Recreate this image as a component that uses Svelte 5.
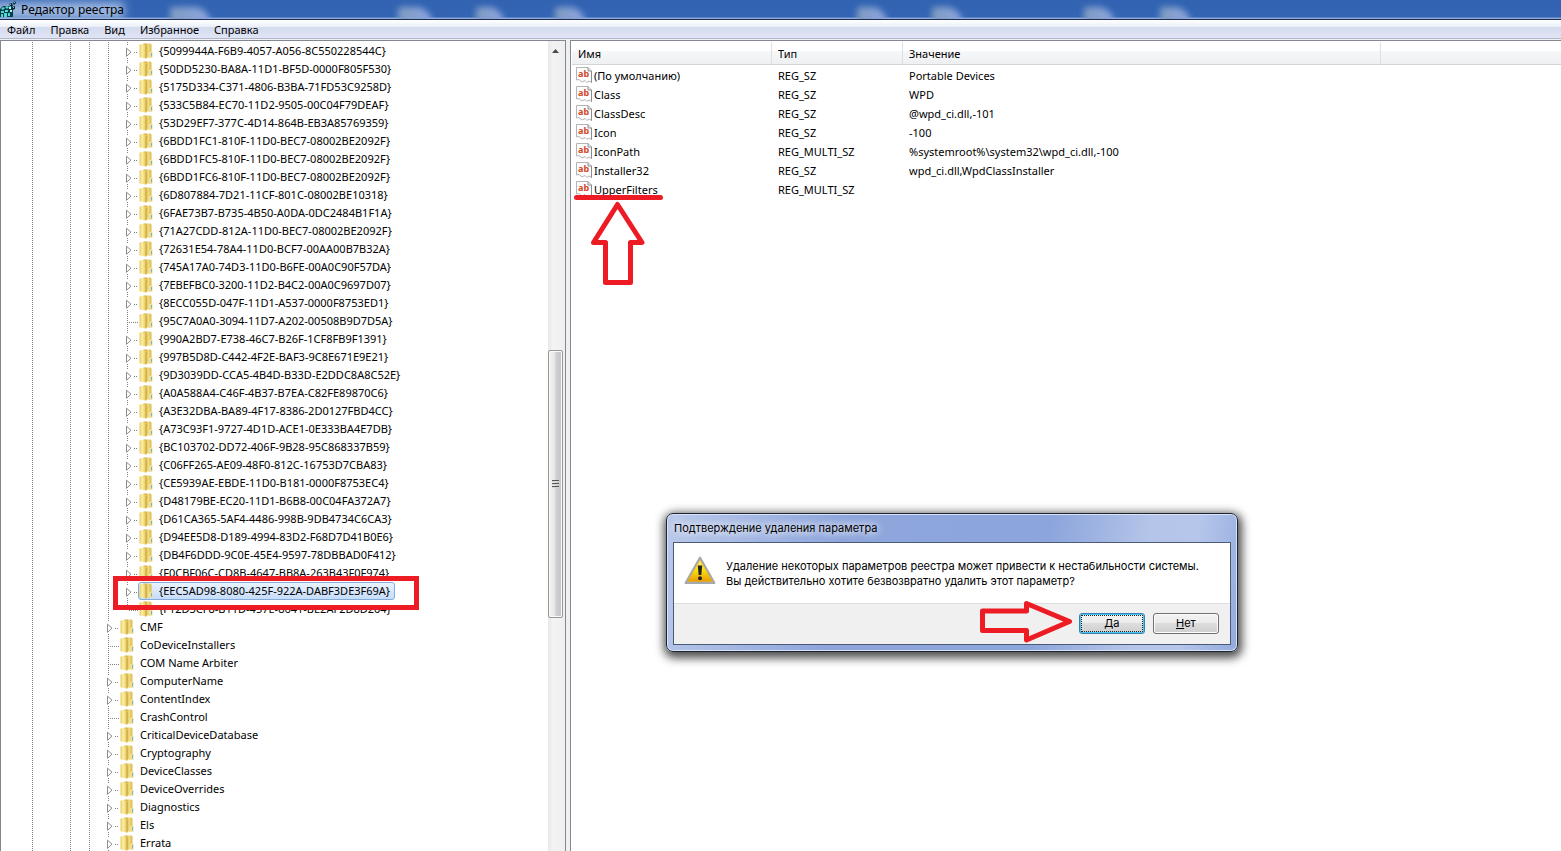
<script>
  const menu = ['Файл', 'Правка', 'Вид', 'Избранное', 'Справка'];

  // keys inside Control\Class, drawn one level deeper
  const classKeys = [
    '{5099944A-F6B9-4057-A056-8C550228544C}',
    '{50DD5230-BA8A-11D1-BF5D-0000F805F530}',
    '{5175D334-C371-4806-B3BA-71FD53C9258D}',
    '{533C5B84-EC70-11D2-9505-00C04F79DEAF}',
    '{53D29EF7-377C-4D14-864B-EB3A85769359}',
    '{6BDD1FC1-810F-11D0-BEC7-08002BE2092F}',
    '{6BDD1FC5-810F-11D0-BEC7-08002BE2092F}',
    '{6BDD1FC6-810F-11D0-BEC7-08002BE2092F}',
    '{6D807884-7D21-11CF-801C-08002BE10318}',
    '{6FAE73B7-B735-4B50-A0DA-0DC2484B1F1A}',
    '{71A27CDD-812A-11D0-BEC7-08002BE2092F}',
    '{72631E54-78A4-11D0-BCF7-00AA00B7B32A}',
    '{745A17A0-74D3-11D0-B6FE-00A0C90F57DA}',
    '{7EBEFBC0-3200-11D2-B4C2-00A0C9697D07}',
    '{8ECC055D-047F-11D1-A537-0000F8753ED1}',
    '{95C7A0A0-3094-11D7-A202-00508B9D7D5A}',
    '{990A2BD7-E738-46C7-B26F-1CF8FB9F1391}',
    '{997B5D8D-C442-4F2E-BAF3-9C8E671E9E21}',
    '{9D3039DD-CCA5-4B4D-B33D-E2DDC8A8C52E}',
    '{A0A588A4-C46F-4B37-B7EA-C82FE89870C6}',
    '{A3E32DBA-BA89-4F17-8386-2D0127FBD4CC}',
    '{A73C93F1-9727-4D1D-ACE1-0E333BA4E7DB}',
    '{BC103702-DD72-406F-9B28-95C868337B59}',
    '{C06FF265-AE09-48F0-812C-16753D7CBA83}',
    '{CE5939AE-EBDE-11D0-B181-0000F8753EC4}',
    '{D48179BE-EC20-11D1-B6B8-00C04FA372A7}',
    '{D61CA365-5AF4-4486-998B-9DB4734C6CA3}',
    '{D94EE5D8-D189-4994-83D2-F68D7D41B0E6}',
    '{DB4F6DDD-9C0E-45E4-9597-78DBBAD0F412}',
    '{F0CBF06C-CD8B-4647-BB8A-263B43F0F974}',
    '{EEC5AD98-8080-425F-922A-DABF3DE3F69A}',
    '{F12D3CF8-B11D-457E-8641-BE2AF2D8D204}'
  ];
  const controlKeys = [
    'CMF',
    'CoDeviceInstallers',
    'COM Name Arbiter',
    'ComputerName',
    'ContentIndex',
    'CrashControl',
    'CriticalDeviceDatabase',
    'Cryptography',
    'DeviceClasses',
    'DeviceOverrides',
    'Diagnostics',
    'Els',
    'Errata'
  ];
  // keys without subkeys have no arrow
  const leaves = [classKeys[15], classKeys[31], 'CoDeviceInstallers', 'COM Name Arbiter', 'CrashControl'];

  const rows = [
    ...classKeys.map((name) => ({ name, deep: true, last: name === classKeys[31] })),
    ...controlKeys.map((name) => ({ name, deep: false, last: false }))
  ];

  let selected = $state(classKeys[30]);

  const values = [
    ['(По умолчанию)', 'REG_SZ', 'Portable Devices'],
    ['Class', 'REG_SZ', 'WPD'],
    ['ClassDesc', 'REG_SZ', '@wpd_ci.dll,-101'],
    ['Icon', 'REG_SZ', '-100'],
    ['IconPath', 'REG_MULTI_SZ', '%systemroot%\\system32\\wpd_ci.dll,-100'],
    ['Installer32', 'REG_SZ', 'wpd_ci.dll,WpdClassInstaller'],
    ['UpperFilters', 'REG_MULTI_SZ', '']
  ];

  // desktop icons that shine through the title bar
  const blobs = [
    [170, 40], [398, 34], [476, 28], [555, 30], [857, 30], [932, 30], [1084, 30], [1160, 30]
  ];
</script>

<svg width="0" height="0" class="defs" aria-hidden="true">
  <defs>
    <linearGradient id="folderFront" x1="0" x2="1">
      <stop offset="0" stop-color="#e6c95c" />
      <stop offset="0.4" stop-color="#fbf0a8" />
      <stop offset="1" stop-color="#e6c75c" />
    </linearGradient>
    <linearGradient id="folderBack" x1="0" x2="1">
      <stop offset="0.3" stop-color="#cfa93c" />
      <stop offset="0.6" stop-color="#f1dc84" />
      <stop offset="1" stop-color="#dcb84a" />
    </linearGradient>
    <linearGradient id="warn" x1="0" x2="0" y1="0" y2="1">
      <stop offset="0" stop-color="#fff27a" />
      <stop offset="0.5" stop-color="#fbdc10" />
      <stop offset="1" stop-color="#e99c08" />
    </linearGradient>
  </defs>
</svg>

<div class="window">
  <header class="titlebar">
    {#each blobs as [x, w]}
      <i class="blob" style="left: {x}px; width: {w}px"></i>
    {/each}
    <svg class="appicon" width="17" height="17" viewBox="0 0 17 17">
      <path d="M0 8l3-3h8l2 3v8H0z" fill="#0c3f45" />
      <path d="M1 8l2-2 2 1-2 2zM5 6l2-1 2 1-2 2zM1 10h3v2H1zM5 9h3v2H5zM1 13h2v3H1zM4 12h3v4H4zM8 12h2v3H8z" fill="#4fd8da" />
      <path d="M9 6l2-1v3H9zM10 9h2v2h-2z" fill="#b7f6f2" />
      <path d="M9 3l3-1 1 3-2 1zM13 2l2-2 1 2-2 2zM12 6l3-1v3l-3 1z" fill="#0a2226" />
      <path d="M10 3h1v1h-1zM14 1h1v1h-1zM13 6h1v1h-1z" fill="#4fd8da" />
    </svg>
    <span class="caption">Редактор реестра</span>
  </header>

  <nav class="menu">
    {#each menu as item}
      <button>{item}</button>
    {/each}
  </nav>

  <main>
    <section class="tree">
      <ul>
        {#each rows as row (row.name)}
          <li>
            <span class="guide"></span>
            <span class="guide blank"></span>
            <span class="guide"></span>
            <span class="guide"></span>
            {#if row.deep}
              <span class="guide"></span>
            {/if}
            <svg class="toggle" width="12" height="18" viewBox="0 0 12 18">
              {#if leaves.includes(row.name)}
                <path d={row.last ? 'M1.5 0V10' : 'M1.5 0V18'} class="dots" />
                <path d="M3 10.5H12" class="dots" />
              {:else}
                <path d="M1.5 0V4M1.5 16V18" class="dots" />
                <path d="M0.5 6.2V14.3L5 10.2z" fill="#fff" stroke="#8c8c8c" />
                <path d="M8 10.5H12" class="dots" />
              {/if}
            </svg>
            <button class="key" class:selected={selected === row.name} onclick={() => (selected = row.name)}>
              <svg width="14" height="16" viewBox="0 0 14 16">
                <path d="M4 1L5 0.5H11.5L12.5 1.5V14.5H7L4 15z" fill="url(#folderBack)" />
                <path d="M0.5 2L1 1.2H6L7 2.5V15.5L1 14.5L0.5 14z" fill="url(#folderFront)" />
                <path d="M7 3V15.5" stroke="#c3a03a" stroke-width="0.8" />
                <path d="M9.5 9V14.5L13.5 14.5V8.5z" fill="#f3df8c" />
                <path d="M12.5 10V13.5" stroke="#6fb3dc" />
              </svg>
              <span>{row.name}</span>
            </button>
            {#if row.name === classKeys[30]}
              <i class="frame"></i>
            {/if}
          </li>
        {/each}
      </ul>
      <div class="scroll">
        <svg class="up" width="7" height="5" viewBox="0 0 7 5"><path d="M0 4L3.5 0L7 4z" fill="#4a4a4a" /></svg>
        <div class="thumb">
          <svg width="7" height="9" viewBox="0 0 7 9">
            <path d="M0 0.5H7M0 3.5H7M0 6.5H7" stroke="#555" />
            <path d="M0 1.5H7M0 4.5H7M0 7.5H7" stroke="#d5d5d5" />
          </svg>
        </div>
      </div>
    </section>

    <section class="values">
      <table>
        <colgroup>
          <col class="c-name" />
          <col class="c-type" />
          <col class="c-data" />
          <col />
        </colgroup>
        <thead>
          <tr>
            <th>Имя</th>
            <th>Тип</th>
            <th>Значение</th>
            <th class="rest"></th>
          </tr>
        </thead>
        <tbody>
          {#each values as [name, type, data]}
            <tr>
              <td>
                <div class="name">
                  <svg width="16" height="17" viewBox="0 0 16 17">
                    <path d="M0.5 0.5H12L15.5 4V15.5L13 14L11 15.5L9 13.5L6 15L3 12.5L0.5 13z" fill="#fdfdfd" stroke="#b4b4b4" />
                    <path d="M12 0.5V4H15.5V15.5" fill="none" stroke="#8b8b8b" />
                    <text x="2" y="10">ab</text>
                  </svg>
                  {name}
                </div>
              </td>
              <td>{type}</td>
              <td>{data}</td>
              <td></td>
            </tr>
          {/each}
        </tbody>
      </table>
      <svg class="pointer" width="92" height="94" viewBox="0 0 92 94">
        <path d="M4.5 4.5H88.5" />
        <path d="M45.5 11.5L70 49.5H58.5V89.5H33.5V49.5H21.5z" />
      </svg>
    </section>
  </main>

  <div class="dialog" role="dialog" aria-labelledby="dialog-title">
    <div class="dialog-title" id="dialog-title"><span>Подтверждение удаления параметра</span></div>
    <div class="dialog-body">
      <div class="message">
        <svg width="32" height="29" viewBox="0 0 32 29">
          <path d="M16 1.5L30.5 27H1.5z" fill="#cfcfcf" stroke="#a5a8ad" stroke-width="2" stroke-linejoin="round" />
          <path d="M16 4L28.5 25.5H3.5z" fill="url(#warn)" stroke="#d9a514" stroke-width="0.6" />
          <path d="M13.8 9.5H18.2L17.3 19H14.7z" fill="#222" />
          <circle cx="16" cy="22.3" r="2" fill="#222" />
        </svg>
        <p>
          Удаление некоторых параметров реестра может привести к нестабильности системы.<br />
          Вы действительно хотите безвозвратно удалить этот параметр?
        </p>
      </div>
      <div class="actions">
        <svg class="pointer" width="96" height="44" viewBox="0 0 96 44">
          <path d="M5.5 10H49.5V2.5L92.5 20.5L49.5 39V29.5H5.5z" />
        </svg>
        <button class="default"><u>Д</u>а</button>
        <button><u>Н</u>ет</button>
      </div>
    </div>
  </div>
</div>

<style>
  :global(body) {
    margin: 0;
    background: #fff;
  }
  .defs {
    position: absolute;
  }
  .window {
    position: relative;
    display: flex;
    flex-direction: column;
    height: 100vh;
    overflow: hidden;
    color: #000;
    background: #f0f0f0;
    font: 11px/18px 'Noto Sans', sans-serif;
  }
  button {
    margin: 0;
    padding: 0;
    border: 0;
    background: none;
    color: inherit;
    font: inherit;
  }
  i {
    display: block;
  }

  .titlebar {
    position: relative;
    display: flex;
    align-items: center;
    gap: 4px;
    box-sizing: border-box;
    height: 20px;
    overflow: hidden;
    border-bottom: 1px solid #1f2c55;
    background: linear-gradient(#3163b2, #3365b4 90%, #8fabda 95%);
  }
  .blob {
    position: absolute;
    top: 7px;
    height: 16px;
    border-radius: 4px 20px 0 0;
    background: linear-gradient(90deg, #7e9cc0, #8fa6e0);
    filter: blur(3px);
  }
  .appicon {
    position: relative;
    z-index: 2;
  }
  .caption {
    position: relative;
    z-index: 1;
    font-size: 12px;
  }
  .caption::before {
    content: '';
    position: absolute;
    z-index: -1;
    inset: 1px 0 0 -28px;
    background: #9db7e0;
    filter: blur(5px);
  }

  .menu {
    display: flex;
    gap: 15px;
    padding: 0 7px;
    height: 18px;
    border-bottom: 1px solid #b0b6d0;
    background: linear-gradient(#fff, #eaeff8 38%, #d4dbee 39%, #e0e5f5);
  }
  .menu button {
    line-height: 20px;
  }

  main {
    flex: 1;
    display: flex;
    gap: 4px;
    min-height: 0;
    margin-top: 1px;
  }
  .tree {
    display: flex;
    flex: 0 0 564px;
    border: 1px solid #828790;
    border-bottom: 0;
    background: #fff;
  }
  ul {
    flex: 1;
    min-width: 0;
    margin: 0;
    padding: 1px 0 0 30px;
    list-style: none;
  }
  li {
    position: relative;
    display: flex;
    height: 18px;
  }
  .guide {
    width: 19px;
    background: repeating-linear-gradient(#808080 0 1px, transparent 1px 2px) 1px 0 / 1px 100% no-repeat;
  }
  .guide.blank {
    background: none;
  }
  .dots {
    fill: none;
    stroke: #808080;
    stroke-dasharray: 1 1;
  }
  .key {
    display: flex;
    align-items: center;
    box-sizing: border-box;
    height: 18px;
    padding: 0 4px 0 0;
    border: 1px solid transparent;
    border-radius: 3px;
    white-space: nowrap;
  }
  .key span {
    padding: 0 0 1px 6px;
  }
  .key.selected {
    border-color: #84acdd;
    background: linear-gradient(#eaf3fe, #c6dcf9);
  }
  .frame {
    position: absolute;
    z-index: 1;
    top: -6px;
    left: 82px;
    width: 296px;
    height: 24px;
    border: 5px solid #ed1c24;
    pointer-events: none;
  }

  .scroll {
    display: flex;
    flex-direction: column;
    align-items: center;
    box-sizing: border-box;
    width: 17px;
    padding: 8px 2px 0 0;
    background: linear-gradient(90deg, #e8e8e8, #f3f3f3 30%, #efefef);
  }
  .thumb {
    display: flex;
    align-items: center;
    justify-content: center;
    box-sizing: border-box;
    width: 15px;
    height: 268px;
    margin-top: 296px;
    border: 1px solid #979797;
    border-radius: 2px;
    box-shadow: inset 0 0 0 1px #fafafa;
    background: linear-gradient(90deg, #f4f4f4, #e6e6e6 45%, #cfd0d2 52%, #c2c3c7);
  }
  .up {
    flex: none;
  }

  .values {
    position: relative;
    flex: 1;
    min-width: 0;
    padding: 1px 0 0 1px;
    border: 1px solid #828790;
    border-width: 1px 0 0 1px;
    background: #fff;
  }
  table {
    width: 100%;
    border-collapse: separate;
    border-spacing: 0;
    table-layout: fixed;
  }
  .c-name {
    width: 200px;
  }
  .c-type {
    width: 131px;
  }
  .c-data {
    width: 478px;
  }
  th {
    height: 20px;
    padding: 2px 6px 0;
    border-right: 1px solid #dfe0e2;
    border-bottom: 1px solid #d5d5d5;
    background: linear-gradient(#fff 40%, #f6f7f8 41%, #eff0f2);
    font-weight: normal;
    text-align: left;
  }
  th.rest {
    border-right: 0;
  }
  tbody::before {
    content: '';
    display: table-row;
    height: 1px;
  }
  td {
    height: 19px;
    padding: 0 6px;
    white-space: nowrap;
  }
  td:first-child {
    padding-left: 4px;
  }
  .name {
    display: flex;
    align-items: center;
    gap: 2px;
  }
  .name text {
    fill: #d24726;
    font: bold 9px 'Noto Sans', sans-serif;
  }

  .pointer {
    position: absolute;
    pointer-events: none;
    fill: none;
    stroke: #ed1c24;
    stroke-width: 5;
    stroke-linecap: round;
    stroke-linejoin: round;
  }
  .values .pointer {
    top: 152px;
    left: 1px;
  }

  .dialog {
    position: absolute;
    z-index: 2;
    top: 513px;
    left: 666px;
    padding: 0 6px 6px;
    border: 1px solid #1c2434;
    border-radius: 7px;
    background: linear-gradient(100deg, #b9c9ea, #8ea6dc 30%, #8ca5db 65%, #b5c5e9 82%, #b5c6ea 90%, #92aadd);
    box-shadow:
      inset 0 0 0 1px #d9e4f8,
      1px 3px 10px 3px rgba(0, 0, 0, 0.7);
    font: 11px/15px 'Inter', sans-serif;
  }
  .dialog-title {
    padding: 0 1px;
    line-height: 28px;
  }
  .dialog-title span {
    text-shadow: 0 0 8px #fff, 0 0 8px #fff;
  }
  .dialog-body {
    border: 1px solid #4c5a78;
    background: #f0f0f0;
  }
  .message {
    display: flex;
    gap: 10px;
    padding: 13px 31px 14px 10px;
    border-bottom: 1px solid #dfdfdf;
    background: #fff;
  }
  .message p {
    margin: 3px 0 0;
    white-space: nowrap;
  }
  .actions {
    position: relative;
    display: flex;
    justify-content: flex-end;
    gap: 8px;
    padding: 9px 11px 10px;
  }
  .actions button {
    width: 66px;
    height: 21px;
    border: 1px solid #707070;
    border-radius: 3px;
    background: linear-gradient(#f2f2f2, #ebebeb 49%, #dddddd 50%, #cfcfcf);
    box-shadow: inset 0 0 0 1px #fcfcfc;
  }
  .actions .default {
    border-color: #3c7fb1;
    outline: 1px dotted #222;
    outline-offset: -3px;
    box-shadow: inset 0 0 0 1px #48c8f0;
  }
  .actions .pointer {
    top: -3px;
    right: 157px;
  }
</style>
